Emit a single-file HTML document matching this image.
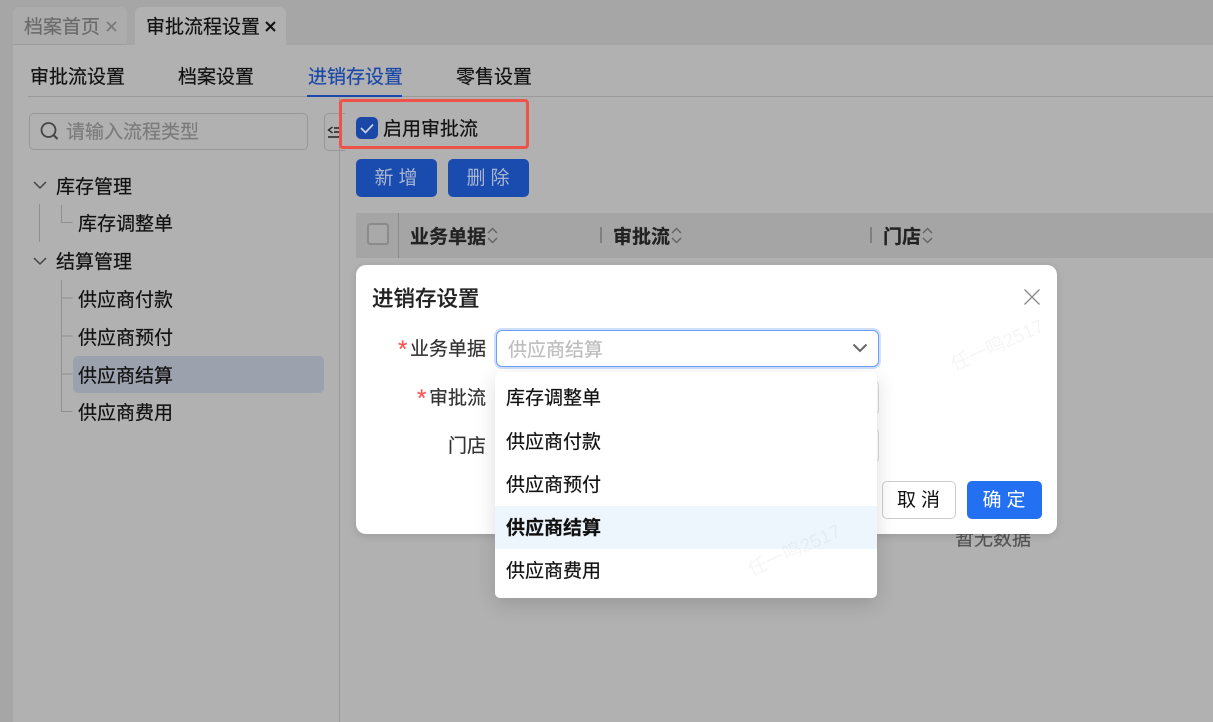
<!DOCTYPE html>
<html lang="zh"><head><meta charset="utf-8"><style>
html,body{margin:0;padding:0}
body{width:1213px;height:722px;overflow:hidden;position:relative;background:#a6a6a6;font-family:"Liberation Sans","Noto Sans CJK SC",sans-serif;color:#111}
.a{position:absolute;white-space:nowrap}
.t{position:absolute;white-space:nowrap;font-size:19px;line-height:24px;margin-top:2px;-webkit-text-stroke:.2px currentColor}
svg{position:absolute;overflow:visible}
</style></head><body>
<div class="a" style="left:13px;top:45px;width:1200px;height:677px;background:#b1b1b1"></div>
<div class="a" style="left:13px;top:7px;width:114px;height:37px;background:#acacac;border-radius:6px 6px 0 0;border-bottom:1px solid #9c9c9c"></div>
<div class="a" style="left:135px;top:7px;width:151px;height:38px;background:#b1b1b1;border-radius:6px 6px 0 0"></div>
<div class="t" style="left:24px;top:14px;color:#6b6b6b">档案首页</div>
<svg style="left:0;top:0" width="300" height="45"><path d="M107 22l9 9M116 22l-9 9" stroke="#777" stroke-width="1.6" fill="none"/><path d="M266 22l9 9M275 22l-9 9" stroke="#111" stroke-width="2" fill="none"/></svg>
<div class="t" style="left:146px;top:14px">审批流程设置</div>

<div class="t" style="left:30px;top:64px">审批流设置</div>
<div class="t" style="left:178px;top:64px">档案设置</div>
<div class="t" style="left:308px;top:64px;color:#1a47a8">进销存设置</div>
<div class="t" style="left:456px;top:64px">零售设置</div>
<div class="a" style="left:28px;top:96px;width:1185px;height:1px;background:#9a9a9a"></div>
<div class="a" style="left:307px;top:95px;width:95px;height:2px;background:#1a47a8"></div>
<div class="a" style="left:339px;top:97px;width:1px;height:625px;background:#9a9a9a"></div>

<div class="a" style="left:29px;top:113px;width:277px;height:35px;border:1px solid #979797;border-radius:5px"></div>
<svg style="left:0;top:0" width="70" height="150"><circle cx="48.500" cy="130" r="7" fill="none" stroke="#444" stroke-width="1.800"/><path d="M53.500 135l4 4" stroke="#444" stroke-width="2"/></svg>
<div class="t" style="left:66px;top:119px;color:#7c7c7c">请输入流程类型</div>
<div class="a" style="left:324px;top:113px;width:20px;height:36px;border:1px solid #979797;border-radius:5px 0 0 5px;border-right:0"></div>
<svg style="left:0;top:0" width="345" height="145"><path d="M332.500 127l-4 3 4 3M334 128h6M334 132h6M328 137h12" stroke="#222" stroke-width="1.400" fill="none"/></svg>

<svg style="left:0;top:0" width="340" height="440" fill="none">
<path d="M34 182l6 6 6-6M34 258l6 6 6-6" stroke="#444" stroke-width="1.500"/>
<path d="M39.500 204v38M61.500 205v17.500h11M61.500 280v131.500h11M61.500 298h11M61.500 336h11M61.500 374h11" stroke="#8f8f8f"/>
</svg>
<div class="t" style="left:56px;top:174px">库存管理</div>
<div class="t" style="left:78px;top:211px">库存调整单</div>
<div class="t" style="left:56px;top:249px">结算管理</div>
<div class="a" style="left:73px;top:356px;width:251px;height:37px;background:#9ca1ae;border-radius:5px"></div>
<div class="t" style="left:78px;top:287px">供应商付款</div>
<div class="t" style="left:78px;top:325px">供应商预付</div>
<div class="t" style="left:78px;top:363px">供应商结算</div>
<div class="t" style="left:78px;top:400px">供应商费用</div>

<div class="a" style="left:339px;top:99px;width:184px;height:44px;border:3px solid #ee5349;border-radius:4px"></div>
<div class="a" style="left:356px;top:117px;width:22px;height:22px;background:#1a47a8;border-radius:5px"></div>
<svg style="left:0;top:0" width="380" height="140"><path d="M361 128l4.500 4.500 7.500-8" stroke="#c8d0e2" stroke-width="1.800" fill="none"/></svg>
<div class="t" style="left:383px;top:116px">启用审批流</div>
<div class="a" style="left:356px;top:159px;width:81px;height:38px;background:#1a4baf;border-radius:5px;color:#a9b6d0;font-size:19px;line-height:40px;text-align:center;letter-spacing:5px;text-indent:4px">新增</div>
<div class="a" style="left:448px;top:159px;width:81px;height:38px;background:#1a4baf;border-radius:5px;color:#a9b6d0;font-size:19px;line-height:40px;text-align:center;letter-spacing:5px;text-indent:4px">删除</div>

<div class="a" style="left:356px;top:213px;width:857px;height:45px;background:#a5a5a5"></div>
<div class="a" style="left:398px;top:213px;width:1px;height:45px;background:#8a8a8a"></div>
<div class="a" style="left:367px;top:223px;width:18px;height:18px;border:2px solid #8b8b8b;border-radius:3px;background:#a9a9a9"></div>
<div class="t" style="left:410px;top:224px;font-weight:700;color:#222">业务单据</div>
<div class="t" style="left:613px;top:224px;font-weight:700;color:#222">审批流</div>
<div class="t" style="left:883px;top:224px;font-weight:700;color:#222">门店</div>
<svg style="left:0;top:0" width="1000" height="260" fill="none" stroke="#666" stroke-width="1.500">
<path d="M488 233l4.500-4.500 4.500 4.500M488 238l4.500 4.500 4.500-4.500M672 233l4.500-4.500 4.500 4.500M672 238l4.500 4.500 4.500-4.500M923 233l4.500-4.500 4.500 4.500M923 238l4.500 4.500 4.500-4.500"/>
<path d="M601 227v16M871 227v16" stroke="#808080" stroke-width="2"/>
</svg>

<div class="t" style="left:955px;top:526px;color:#555">暂无数据</div>

<div class="a" style="left:356px;top:265px;width:701px;height:269px;background:#fff;border-radius:10px;box-shadow:0 2px 8px rgba(0,0,0,.12)"></div>
<div class="t" style="left:372px;top:285px;font-size:21.500px;font-weight:500;color:#222">进销存设置</div>
<svg style="left:0;top:0" width="1060" height="320"><path d="M1024.500 289.500l15 15M1039.500 289.500l-15 15" stroke="#8a8a8a" stroke-width="1.300" fill="none"/></svg>
<div class="t" style="left:398px;top:336px;font-size:24px;color:#f55">*</div>
<div class="t" style="left:410px;top:336px;color:#333">业务单据</div>
<div class="t" style="left:417px;top:385px;font-size:24px;color:#f55">*</div>
<div class="t" style="left:429px;top:385px;color:#333">审批流</div>
<div class="t" style="left:448px;top:433px;color:#333">门店</div>
<div class="a" style="left:496px;top:330px;width:381px;height:35px;border:1px solid #6d9ff5;border-radius:6px;box-shadow:0 0 0 2px #cfe0fd;background:#fff"></div>
<div class="t" style="left:508px;top:337px;color:#bdbdbd">供应商结算</div>
<svg style="left:0;top:0" width="880" height="360"><path d="M853.500 344.500l6.500 6.500 6.500-6.500" stroke="#666" stroke-width="2" fill="none"/></svg>
<div class="a" style="left:870px;top:380px;width:8px;height:33px;border:1px solid #ddd;border-left:0;border-radius:0 5px 5px 0"></div>
<div class="a" style="left:870px;top:428px;width:8px;height:33px;border:1px solid #ddd;border-left:0;border-radius:0 5px 5px 0"></div>
<div class="a" style="left:882px;top:481px;width:72px;height:36px;border:1px solid #ccc;border-radius:5px;background:#fff;font-size:19px;line-height:38px;text-align:center;letter-spacing:5px;text-indent:4px">取消</div>
<div class="a" style="left:967px;top:481px;width:75px;height:38px;background:#2470f2;border-radius:5px;color:#fff;font-size:19px;line-height:40px;text-align:center;letter-spacing:5px;text-indent:4px">确定</div>

<div class="a" style="left:495px;top:372px;width:382px;height:226px;background:#fff;border-radius:5px;box-shadow:0 6px 20px rgba(0,0,0,.14)"></div>
<div class="a" style="left:495px;top:506px;width:382px;height:43px;background:#edf5fd"></div>
<div class="t" style="left:506px;top:385px">库存调整单</div>
<div class="t" style="left:506px;top:429px">供应商付款</div>
<div class="t" style="left:506px;top:472px">供应商预付</div>
<div class="t" style="left:506px;top:515px;font-weight:700">供应商结算</div>
<div class="t" style="left:506px;top:558px">供应商费用</div>

<div class="a" style="left:946px;top:352px;font-size:19px;color:rgba(0,0,0,.04);transform:rotate(-24deg);transform-origin:left top">任一鸣2517</div>
<div class="a" style="left:743px;top:557px;font-size:19px;color:rgba(0,0,0,.04);transform:rotate(-24deg);transform-origin:left top">任一鸣2517</div>
</body></html>
